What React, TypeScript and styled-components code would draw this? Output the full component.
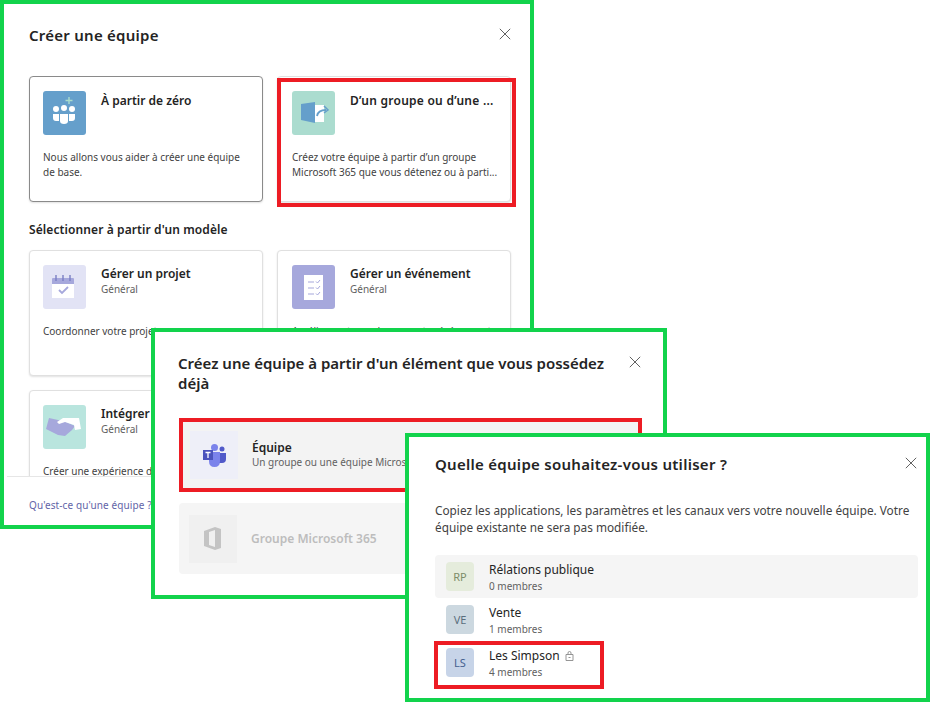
import React from 'react';
import styled, { createGlobalStyle } from 'styled-components';

const GlobalStyle = createGlobalStyle`
  html, body {
    margin: 0;
    padding: 0;
    background: #fff;
  }
  body {
    font-family: "Noto Sans", "Open Sans", Arial, sans-serif;
    color: #242424;
  }
  * {
    box-sizing: border-box;
  }
`;

const Canvas = styled.div`
  position: relative;
  width: 930px;
  height: 702px;
  overflow: hidden;
  background: #fff;
`;

// each capture sits freely on the canvas, like a window on a desktop
const Capture = styled.section<{ $left: number; $top: number; $width: number; $height: number }>`
  position: absolute;
  left: ${(p) => p.$left}px;
  top: ${(p) => p.$top}px;
  width: ${(p) => p.$width}px;
  height: ${(p) => p.$height}px;
  border: 4px solid #12d34c;
  background: #fff;
  display: flex;
  flex-direction: column;
`;

const Header = styled.header<{ $padding: string }>`
  display: flex;
  justify-content: space-between;
  align-items: flex-start;
  padding: ${(p) => p.$padding};
`;

const Title = styled.h2<{ $width?: number; $tracking?: number }>`
  margin: 0;
  font-size: 15px;
  line-height: 20px;
  font-weight: 600;
  color: #242424;
  letter-spacing: ${(p) => p.$tracking ?? 0}px;
  width: ${(p) => (p.$width ? `${p.$width}px` : 'auto')};
`;

const CloseButton = styled.button`
  border: 0;
  background: none;
  padding: 0;
  margin-top: 3px;
  width: 12px;
  height: 12px;
  display: flex;
  color: #616161;
`;

const Body = styled.div`
  flex: 1;
  overflow: hidden;
  padding: 0 19px 0 25px;
`;

const CardGrid = styled.div`
  display: grid;
  grid-template-columns: 234px 234px;
  grid-auto-rows: 126px;
  gap: 14px;
`;

const Card = styled.article<{ $active?: boolean }>`
  position: relative;
  border: 1px solid ${(p) => (p.$active ? '#8a8a8a' : '#e0e0e0')};
  border-radius: 4px;
  background: #fff;
  padding: 14px 8px 0 13px;
  box-shadow: 0 1px 2px rgba(0, 0, 0, 0.12);

  &:nth-child(even) {
    padding-left: 14px;
  }
`;

const CardTop = styled.div`
  display: flex;
  gap: 15px;
  height: 44px;
  margin-bottom: 15px;
`;

const Tile = styled.div<{ $bg: string }>`
  width: 43px;
  height: 44px;
  flex: none;
  border-radius: 3px;
  background: ${(p) => p.$bg};
  display: flex;
`;

const CardHeading = styled.div`
  padding-top: 1px;
`;

const CardTitle = styled.div<{ $low?: boolean; $tracking?: number }>`
  font-size: 12px;
  line-height: 16px;
  font-weight: 600;
  letter-spacing: ${(p) => p.$tracking ?? 0}px;
  margin-top: ${(p) => (p.$low ? '1px' : '0')};
`;

const CardTag = styled.div`
  font-size: 10px;
  line-height: 14px;
  color: #616161;
`;

const CardText = styled.p`
  margin: 0;
  font-size: 10px;
  line-height: 15px;
  color: #424242;
`;

const SectionLabel = styled.h3`
  margin: 20px 0 12px;
  font-size: 12px;
  line-height: 16px;
  font-weight: 600;
  letter-spacing: 0.1px;
`;

const Footer = styled.footer`
  height: 49px;
  margin-left: 3px;
  border-top: 1px solid #e6e6e6;
  padding: 21px 0 0 22px;
  font-size: 10px;
  line-height: 14px;
  letter-spacing: 0.1px;
  color: #6264a7;
`;

const SourceList = styled.div`
  display: flex;
  flex-direction: column;
  gap: 13px;
  padding: 0 0 0 24px;
`;

const SourceRow = styled.div<{ $disabled?: boolean }>`
  position: relative;
  width: 462px;
  height: 71px;
  border-radius: 4px;
  background: ${(p) => (p.$disabled ? '#f5f5f5' : '#f3f3f3')};
  display: flex;
  align-items: center;
  gap: 14px;
  padding-left: ${(p) => (p.$disabled ? 10 : 11)}px;
`;

const SourceTile = styled.div<{ $bg: string }>`
  width: 48px;
  height: 48px;
  flex: none;
  background: ${(p) => p.$bg};
  display: flex;
`;

const SourceName = styled.div<{ $disabled?: boolean }>`
  font-size: 12px;
  line-height: 15px;
  font-weight: 600;
  color: ${(p) => (p.$disabled ? '#bdbdbd' : '#242424')};
`;

const SourceHint = styled.div`
  font-size: 10px;
  line-height: 14px;
  color: #616161;
`;

const Intro = styled.p`
  margin: 0 0 19px;
  padding: 0 8px 0 26px;
  font-size: 11.8px;
  line-height: 17px;
  color: #424242;
`;

const TeamList = styled.div`
  display: flex;
  flex-direction: column;
  padding: 0 8px 0 26px;
`;

const TeamRow = styled.div<{ $selected?: boolean }>`
  position: relative;
  height: 43px;
  border-radius: 4px;
  background: ${(p) => (p.$selected ? '#f5f5f5' : 'transparent')};
  display: flex;
  align-items: center;
  gap: 15px;
  padding-left: 11px;
`;

const Avatar = styled.div<{ $bg: string; $fg: string }>`
  width: 28px;
  height: 29px;
  flex: none;
  border-radius: 4px;
  background: ${(p) => p.$bg};
  color: ${(p) => p.$fg};
  display: flex;
  align-items: center;
  justify-content: center;
  font-size: 11px;
`;

const TeamName = styled.div`
  display: flex;
  align-items: center;
  gap: 5px;
  font-size: 12px;
  line-height: 18px;
  color: #242424;
`;

const TeamCount = styled.div`
  font-size: 10px;
  line-height: 14px;
  color: #616161;
`;

// red annotation drawn over the thing it points at
const Highlight = styled.div<{ $inset: string }>`
  position: absolute;
  inset: ${(p) => p.$inset};
  border: 4px solid #ed1c24;
  pointer-events: none;
`;

const CloseIcon = () => (
  <svg width="12" height="12" viewBox="0 0 12 12" fill="none" stroke="currentColor" strokeWidth="1">
    <path d="M.8.8l10.4 10.4M11.2.8L.8 11.2" />
  </svg>
);

const PeopleIcon = () => (
  <svg width="43" height="44" viewBox="0 0 43 44">
    <path d="M26 6v7M22.500 9.500h7" stroke="#a9dccc" strokeWidth="1.400" />
    <g fill="#fff">
      <circle cx="13" cy="18" r="3" />
      <circle cx="21" cy="17" r="3" />
      <circle cx="29" cy="18" r="3" />
      <path d="M10 23h6v7h-3q-3 0-3-3zM26 23h6v4q0 3-3 3h-3z" />
      <path d="M17 23h8v7q0 3-4 3t-4-3z" />
    </g>
  </svg>
);

const GroupIcon = () => (
  <svg width="43" height="44" viewBox="0 0 43 44">
    <path d="M23 14h9v17h-9z" fill="#fff" />
    <path d="M9 13l14-2v21l-14-3z" fill="#659fcb" />
    <path d="M25 25q1-6 9-6" fill="none" stroke="#659fcb" strokeWidth="1.800" />
    <path d="M32 15l4 4-4 3" fill="none" stroke="#659fcb" strokeWidth="1.500" />
  </svg>
);

const CalendarIcon = () => (
  <svg width="43" height="44" viewBox="0 0 43 44">
    <path d="M9 18h22v15H9z" fill="#fff" />
    <path d="M9 14q0-1 1-1h20q1 0 1 1v5H9z" fill="#a6a8dc" />
    <path d="M13 10v6M20 10v6M27 10v6" stroke="#7b7fc4" strokeWidth="1.400" />
    <path d="M16 25l3 3 6-6" fill="none" stroke="#a6a8dc" strokeWidth="1.800" />
  </svg>
);

const ChecklistIcon = () => (
  <svg width="43" height="44" viewBox="0 0 43 44">
    <path d="M12 10h19v25H12z" fill="#fff" />
    <path d="M16 17h6M16 23h6M16 29h6" stroke="#a6a8dc" strokeWidth="1.200" />
    <path d="M24 16.500l1.500 1.500 2.500-3M24 22.500l1.500 1.500 2.500-3M24 28.500l1.500 1.500 2.500-3" fill="none" stroke="#a6a8dc" />
  </svg>
);

const HandshakeIcon = () => (
  <svg width="43" height="44" viewBox="0 0 43 44">
    <path d="M6 13l9 2 8 2 9 4-3 4-7 6-7-1-12-6z" fill="#a6a8dc" />
    <path d="M14 17l6-4h16l2 11-6 1-1-5-9-3-6 2z" fill="#fff" />
  </svg>
);

const TeamsIcon = () => (
  <svg width="48" height="48" viewBox="0 0 48 48">
    <circle cx="32" cy="18" r="2.500" fill="#5059c9" />
    <path d="M28 22h8v6q0 4-4 4h-4z" fill="#5059c9" />
    <circle cx="24.500" cy="16.500" r="3.500" fill="#7b83eb" />
    <path d="M19 21h11v9q0 6-5.500 6T19 30z" fill="#7b83eb" />
    <path d="M13 19h10v10H13z" fill="#4b53bc" />
    <path d="M15.500 21.500h5M18 21.500v5.500" stroke="#fff" strokeWidth="1.300" />
  </svg>
);

const OfficeIcon = () => (
  <svg width="48" height="48" viewBox="0 0 48 48">
    <path d="M15 16l11-4 6 2v19l-6 2-11-4zM20 17v13l6 2V15z" fill="#c4c4c4" fillRule="evenodd" />
  </svg>
);

const LockIcon = () => (
  <svg width="9" height="10" viewBox="0 0 9 10" fill="none" stroke="#8a8a8a" strokeWidth="0.900">
    <path d="M1 3.500h7v6H1zM3 3.500V2q0-1.500 1.500-1.500T6 2v1.500" />
    <path d="M3.500 6.500h2" />
  </svg>
);

const teams = [
  { initials: 'RP', name: 'Rélations publique', count: '0 membres', bg: '#e5ecdc', fg: '#7d8c6a', selected: true },
  { initials: 'VE', name: 'Vente', count: '1 membres', bg: '#ccd8e0', fg: '#5a6f7d' },
  { initials: 'LS', name: 'Les Simpson', count: '4 membres', bg: '#c7d4e8', fg: '#45608f', locked: true, marked: true },
];

export default function App() {
  return (
    <>
      <GlobalStyle />
      <Canvas>
        <Capture $left={0} $top={0} $width={534} $height={529}>
          <Header $padding="21px 19px 31px 25px">
            <Title $tracking={0.25}>Créer une équipe</Title>
            <CloseButton><CloseIcon /></CloseButton>
          </Header>
          <Body>
            <CardGrid>
              <Card $active>
                <CardTop>
                  <Tile $bg="#659fcb"><PeopleIcon /></Tile>
                  <CardHeading><CardTitle $low>À partir de zéro</CardTitle></CardHeading>
                </CardTop>
                <CardText>Nous allons vous aider à créer une équipe de base.</CardText>
              </Card>
              <Card>
                <CardTop>
                  <Tile $bg="#abdccf"><GroupIcon /></Tile>
                  <CardHeading><CardTitle $low $tracking={0.25}>D’un groupe ou d’une ...</CardTitle></CardHeading>
                </CardTop>
                <CardText>Créez votre équipe à partir d’un groupe Microsoft 365 que vous détenez ou à parti...</CardText>
                <Highlight $inset="1px -6px -6px -1px" />
              </Card>
            </CardGrid>
            <SectionLabel>Sélectionner à partir d'un modèle</SectionLabel>
            <CardGrid>
              <Card>
                <CardTop>
                  <Tile $bg="#e2e3f5"><CalendarIcon /></Tile>
                  <CardHeading>
                    <CardTitle>Gérer un projet</CardTitle>
                    <CardTag>Général</CardTag>
                  </CardHeading>
                </CardTop>
                <CardText>Coordonner votre projet</CardText>
              </Card>
              <Card>
                <CardTop>
                  <Tile $bg="#a6a8dc"><ChecklistIcon /></Tile>
                  <CardHeading>
                    <CardTitle>Gérer un événement</CardTitle>
                    <CardTag>Général</CardTag>
                  </CardHeading>
                </CardTop>
                <CardText>Améliorez et coordonnez votre événement et</CardText>
              </Card>
              <Card>
                <CardTop>
                  <Tile $bg="#b9e5de"><HandshakeIcon /></Tile>
                  <CardHeading>
                    <CardTitle>Intégrer</CardTitle>
                    <CardTag>Général</CardTag>
                  </CardHeading>
                </CardTop>
                <CardText>Créer une expérience d'intégration</CardText>
              </Card>
            </CardGrid>
          </Body>
          <Footer>Qu'est-ce qu'une équipe ?</Footer>
        </Capture>

        <Capture $left={151} $top={328} $width={516} $height={271}>
          <Header $padding="21px 22px 26px 23px">
            <Title $width={440}>Créez une équipe à partir d'un élément que vous possédez déjà</Title>
            <CloseButton><CloseIcon /></CloseButton>
          </Header>
          <SourceList>
            <SourceRow>
              <SourceTile $bg="#eeeff8"><TeamsIcon /></SourceTile>
              <div>
                <SourceName>Équipe</SourceName>
                <SourceHint>Un groupe ou une équipe Microsoft 365</SourceHint>
              </div>
              <Highlight $inset="-1px -1px -2px 0" />
            </SourceRow>
            <SourceRow $disabled>
              <SourceTile $bg="#f0f0f0"><OfficeIcon /></SourceTile>
              <SourceName $disabled>Groupe Microsoft 365</SourceName>
            </SourceRow>
          </SourceList>
        </Capture>

        <Capture $left={405} $top={433} $width={525} $height={269}>
          <Header $padding="17px 9px 28px 26px">
            <Title $tracking={0.28}>Quelle équipe souhaitez-vous utiliser ?</Title>
            <CloseButton><CloseIcon /></CloseButton>
          </Header>
          <Intro>Copiez les applications, les paramètres et les canaux vers votre nouvelle équipe. Votre équipe existante ne sera pas modifiée.</Intro>
          <TeamList>
            {teams.map((team) => (
              <TeamRow key={team.initials} $selected={team.selected}>
                <Avatar $bg={team.bg} $fg={team.fg}>{team.initials}</Avatar>
                <div>
                  <TeamName>
                    {team.name}
                    {team.locked && <LockIcon />}
                  </TeamName>
                  <TeamCount>{team.count}</TeamCount>
                </div>
                {team.marked && <Highlight $inset="0 314px -5px -1px" />}
              </TeamRow>
            ))}
          </TeamList>
        </Capture>
      </Canvas>
    </>
  );
}
